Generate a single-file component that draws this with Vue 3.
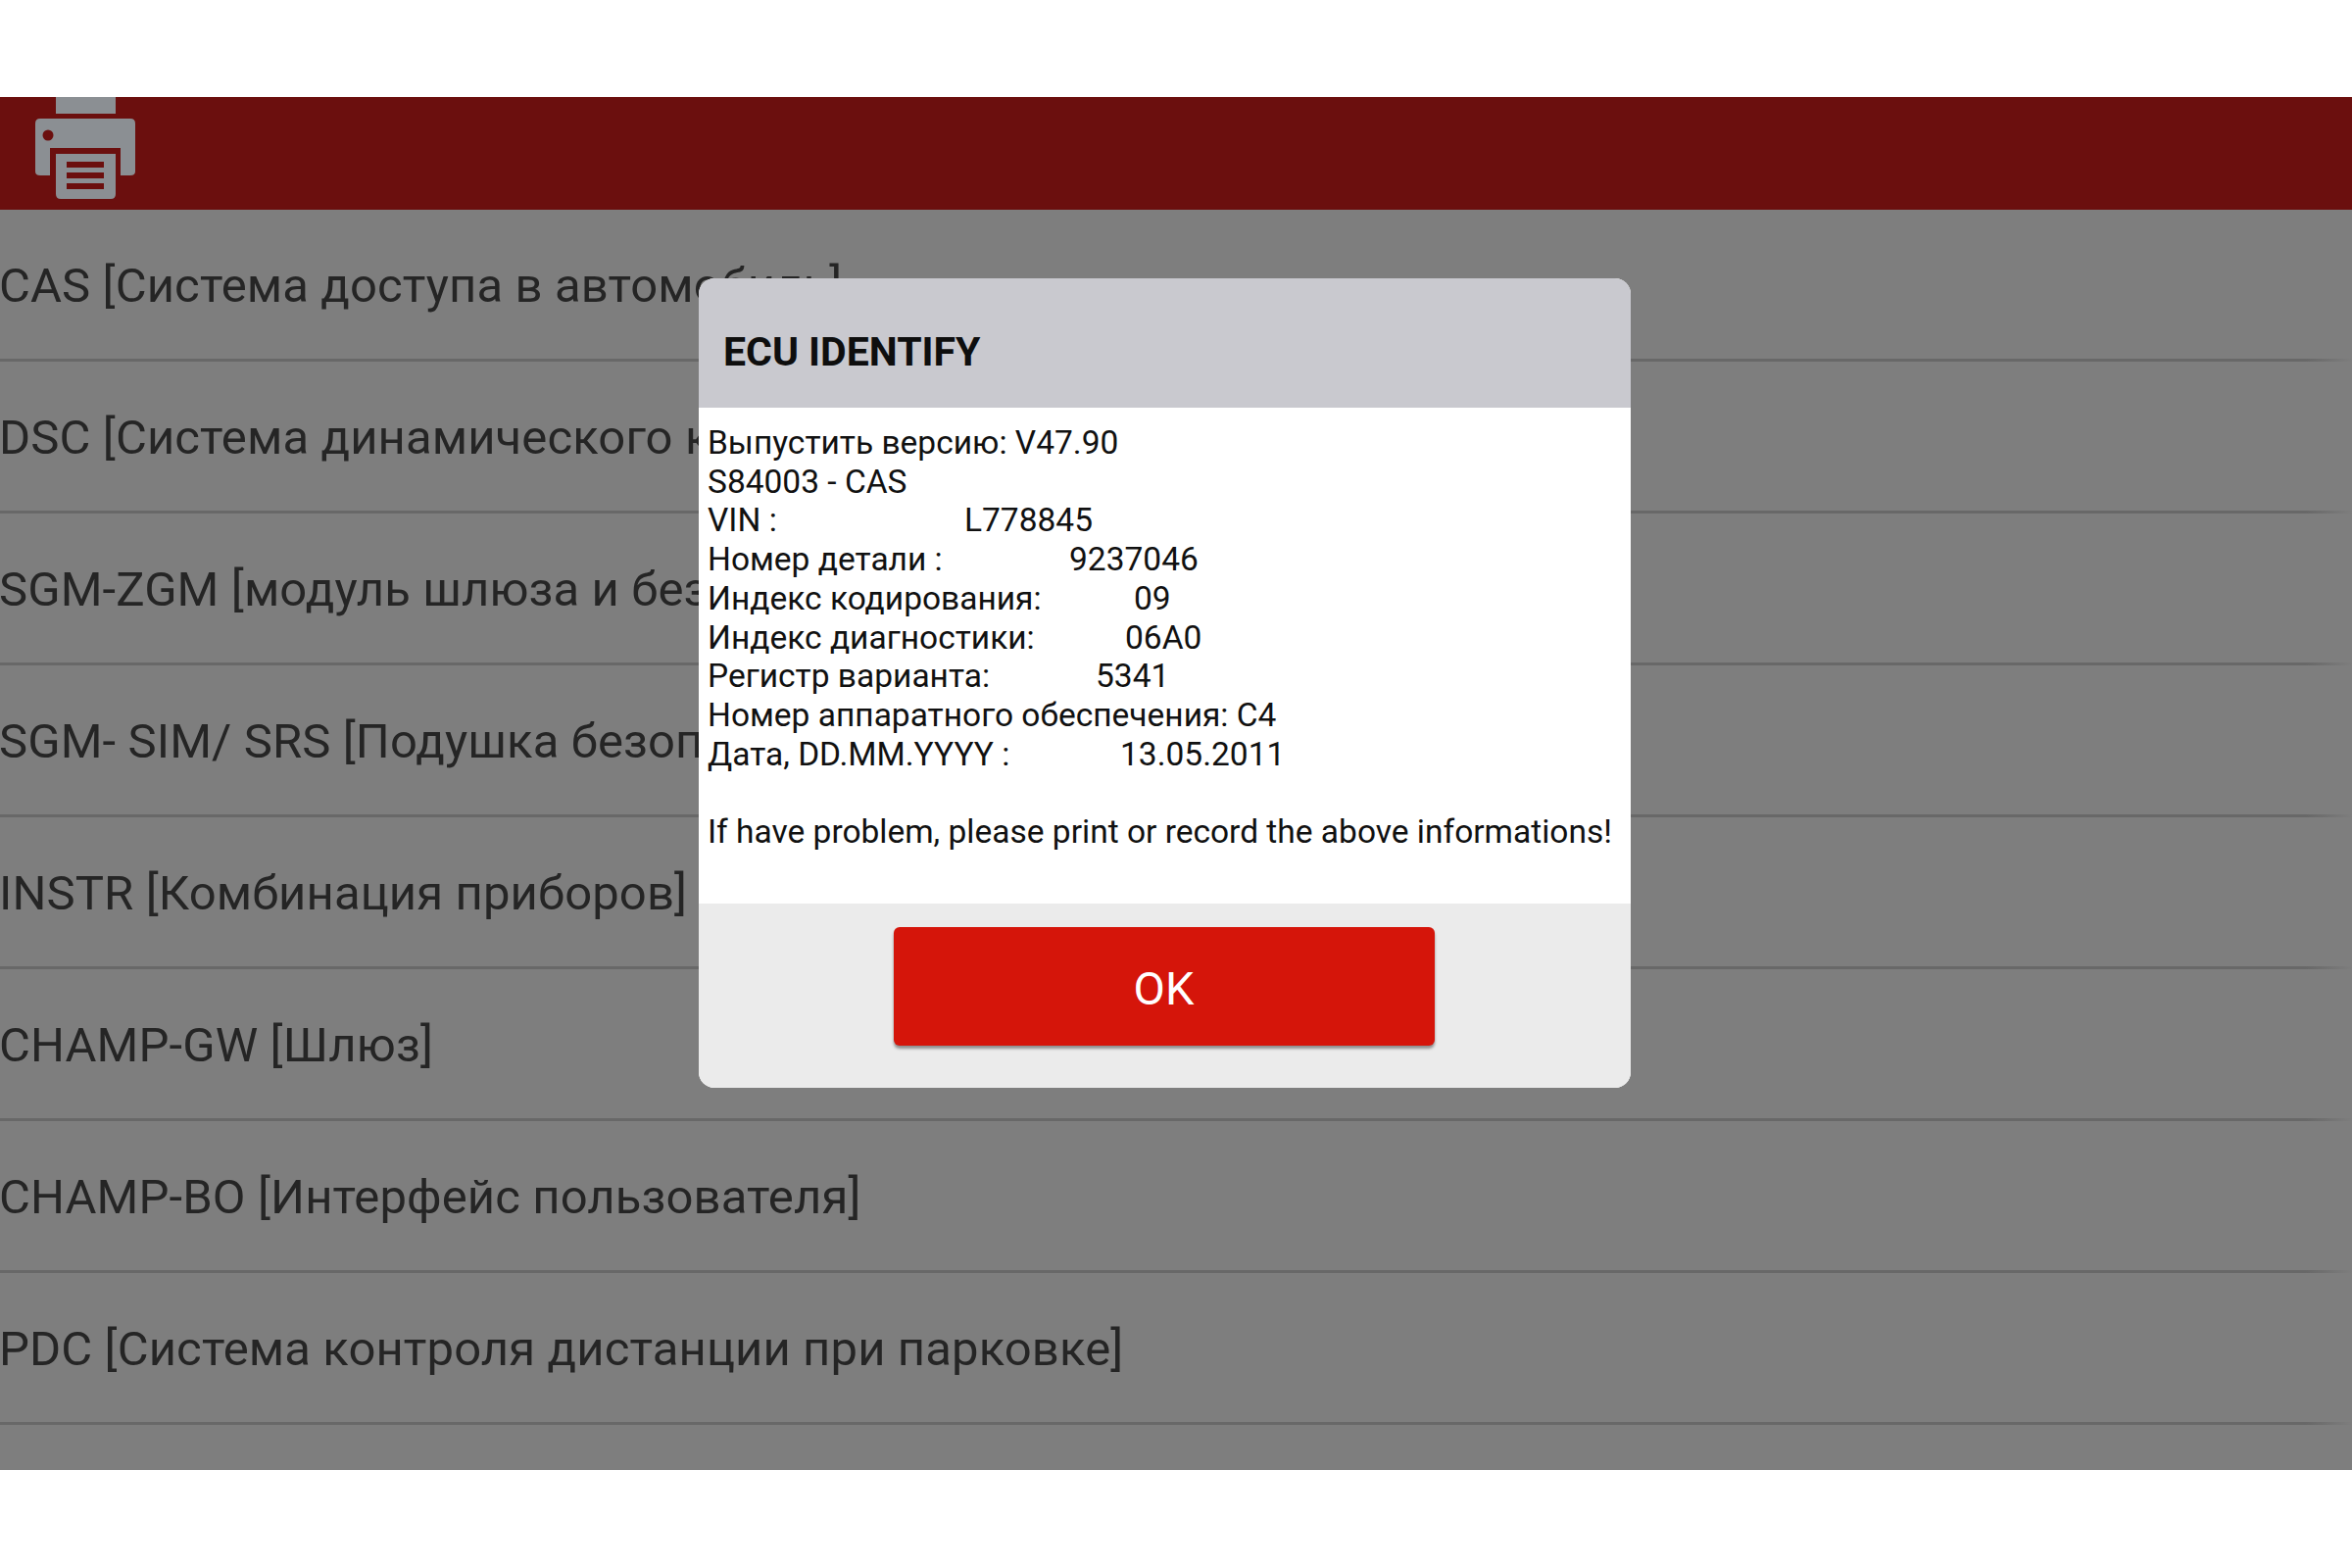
<template>
  <div class="page">
    <div class="screen">
      <header class="topbar">
        <svg class="printer" viewBox="0 0 102 104" width="102" height="104" aria-hidden="true">
          <rect x="21" y="0" width="61" height="17" fill="#8b8f93" />
          <path d="M5 22H97Q102 22 102 27V76Q102 80 97 80H87V52H15V80H5Q0 80 0 76V27Q0 22 5 22Z" fill="#8b8f93" />
          <circle cx="13" cy="39" r="5.5" fill="#6b0f0e" />
          <path d="M21 58H82V99Q82 104 77 104H26Q21 104 21 99Z" fill="#8b8f93" />
          <rect x="32" y="66" width="38" height="6" fill="#6b0f0e" />
          <rect x="32" y="77" width="38" height="6" fill="#6b0f0e" />
          <rect x="32" y="88" width="38" height="6" fill="#6b0f0e" />
        </svg>
      </header>

      <ul class="modules">
        <li v-for="item in modules" :key="item">{{ item }}</li>
      </ul>

      <section class="dialog" role="dialog" aria-label="ECU IDENTIFY">
        <h2 class="dialog-title">ECU IDENTIFY</h2>
        <div class="dialog-body">
          <div v-for="row in info" :key="row.label" class="info-row">
            <span :style="row.width ? { width: row.width + 'px' } : null" class="info-label">{{ row.label }}</span>
            <span>{{ row.value }}</span>
          </div>
          <p class="note">If have problem, please print or record the above informations!</p>
        </div>
        <div class="dialog-footer">
          <button class="ok" type="button">OK</button>
        </div>
      </section>
    </div>
  </div>
</template>

<script setup>
const modules = [
  'CAS [Система доступа в автомобиль]',
  'DSC [Система динамического контроля]',
  'SGM-ZGM [модуль шлюза и безопасности]',
  'SGM- SIM/ SRS [Подушка безопасности]',
  'INSTR [Комбинация приборов]',
  'CHAMP-GW [Шлюз]',
  'CHAMP-BO [Интерфейс пользователя]',
  'PDC [Система контроля дистанции при парковке]'
]

const info = [
  { label: 'Выпустить версию: V47.90', value: '' },
  { label: 'S84003 - CAS', value: '' },
  { label: 'VIN :', value: 'L778845', width: 262 },
  { label: 'Номер детали :', value: '9237046', width: 369 },
  { label: 'Индекс кодирования:', value: '09', width: 435 },
  { label: 'Индекс диагностики:', value: '06A0', width: 426 },
  { label: 'Регистр варианта:', value: '5341', width: 396 },
  { label: 'Номер аппаратного обеспечения: C4', value: '' },
  { label: 'Дата, DD.MM.YYYY :', value: '13.05.2011', width: 421 }
]
</script>

<style>
html, body { margin: 0; background: #fff; }
</style>

<style scoped>
.page { width: 2400px; height: 1600px; padding-top: 99px; box-sizing: border-box; background: #fff; font-family: Roboto, "Liberation Sans", sans-serif; }
.screen { position: relative; height: 1401px; background: #7e7e7e; }
.topbar { height: 115px; background: #6b0f0e; display: flex; padding-left: 36px; box-sizing: border-box; }
.printer { display: block; }
.modules { list-style: none; margin: 0; padding: 0; }
.modules li { height: 155px; box-sizing: border-box; display: flex; align-items: center; padding-top: 2px; margin-left: -1px; font-size: 49px; letter-spacing: .12px; color: #252525; border-bottom: 3px solid; border-image: linear-gradient(to right, #686868 0, #686868 98%, #7e7e7e 100%) 1; white-space: nowrap; }
.dialog { position: absolute; left: 713px; top: 185px; width: 951px; height: 826px; border-radius: 16px; overflow: hidden; display: flex; flex-direction: column; background: #fff; }
.dialog-title { margin: 0; height: 132px; box-sizing: border-box; padding: 51px 0 0 25px; background: #c9c9cf; color: #0e0e0e; font-size: 41px; line-height: 48px; font-weight: 700; }
.dialog-body { height: 506px; box-sizing: border-box; padding: 16px 0 0 9px; color: #111; font-size: 33.5px; line-height: 39.7px; }
.info-row { display: flex; min-height: 39.7px; white-space: nowrap; }
.info-label { display: block; flex: none; }
.note { margin: 39.7px 0 0; white-space: nowrap; }
.dialog-footer { flex: 1; background: #ebebeb; display: flex; justify-content: center; align-items: flex-start; padding-top: 24px; padding-right: 2px; }
.ok { width: 552px; height: 121px; padding-top: 5px; border: 0; border-radius: 6px; background: #d5150a; color: #fff; font-family: inherit; font-size: 47px; box-shadow: 0 3px 3px rgba(0,0,0,.4); }
</style>
